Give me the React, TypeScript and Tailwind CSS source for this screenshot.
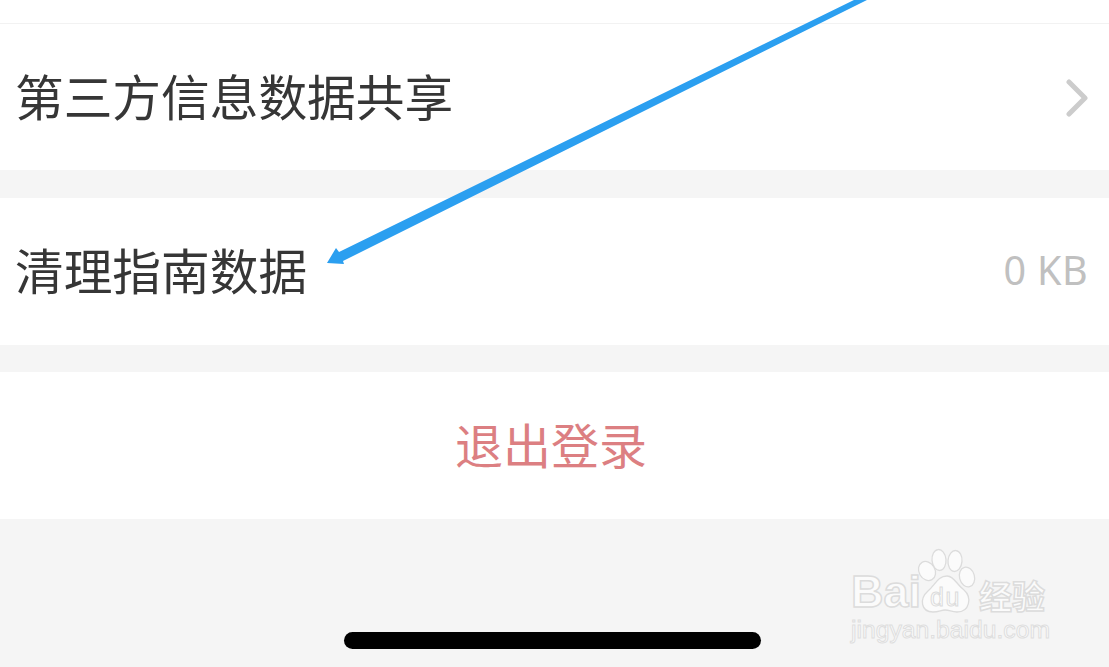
export default function App() {
  const font = "font-['Noto_Sans_CJK_SC','Noto_Sans',sans-serif]";
  const mark = "text-[#fbfbfb] [-webkit-text-stroke:1.5px_#dcdcdc]";
  return (
    <div className={`relative w-[1109px] h-[667px] overflow-hidden bg-[#f5f5f5] ${font}`}>
      <div className="h-[170px] bg-white flex flex-col">
        <div className="h-[24px] border-b border-[#f2f2f2]" />
        <div className="flex-1 flex items-center justify-between pl-[15px] pr-[21px]">
          <span className="text-[48.7px] leading-none text-[#363636] mb-[4px]">第三方信息数据共享</span>
          <svg width="22" height="38" viewBox="0 0 22 38" fill="none" className="mt-[2px]">
            <path d="M3 3 L19 19 L3 35" stroke="#cccccc" strokeWidth="5" strokeLinecap="round" strokeLinejoin="round" />
          </svg>
        </div>
      </div>
      <div className="mt-[28px] h-[147px] bg-white flex items-center justify-between pl-[15px] pr-[21px]">
        <span className="text-[48.7px] leading-none text-[#363636] mb-[4px]">清理指南数据</span>
        <span className="text-[39.5px] leading-none tracking-[0.4px] text-[#c0c0c0] font-['Noto_Sans',sans-serif] mb-[2px]">0 KB</span>
      </div>
      <div className="mt-[27px] h-[147px] bg-white flex items-center justify-center pr-[7px]">
        <span className="text-[48px] leading-none text-[#dc7f82] mb-[5px]">退出登录</span>
      </div>

      <div className="absolute left-[344px] top-[632px] w-[417px] h-[17px] rounded-full bg-black" />

      <svg className="absolute left-0 top-0" width="1109" height="667" viewBox="0 0 1109 667" fill="none">
        <path d="M856 -1 L869 -1 L343 261 L344 264 L327 263 L336 248 L339 252 Z" fill="#2b9ff0" />
      </svg>

      <div className="absolute left-[851px] top-[548px] w-[200px] flex flex-col gap-[5px]">
        <div className="flex items-end h-[65px]">
          <span className={`text-[45px] leading-none font-bold font-['Liberation_Sans',sans-serif] mb-[-1px] ${mark}`}>Bai</span>
          <div className="relative w-[60px] h-[65px] ml-[-4px] shrink-0">
            <svg width="60" height="65" viewBox="0 0 60 65" fill="#fbfbfb" stroke="#dcdcdc" strokeWidth="1.3">
              <ellipse cx="10" cy="23" rx="8" ry="10" transform="rotate(-30 10 23)" />
              <ellipse cx="22" cy="12" rx="7" ry="10.5" transform="rotate(-5 22 12)" />
              <ellipse cx="38" cy="13" rx="7" ry="10.5" transform="rotate(5 38 13)" />
              <ellipse cx="50" cy="29" rx="7.5" ry="10" transform="rotate(-15 50 29)" />
              <path d="M30 28 C37 28 39 36 47 42 C55 49 53 64 40 64 C34 64 33 62 28 62 C24 62 22 64 16 64 C4 64 2 51 11 43 C18 37 21 28 30 28 Z" />
            </svg>
            <span className="absolute left-[13px] top-[37px] text-[25px] leading-none tracking-[1.5px] font-['Liberation_Sans',sans-serif] text-[#fbfbfb] [-webkit-text-stroke:1px_#dcdcdc]">du</span>
          </div>
          <span className={`ml-[2px] text-[33px] leading-none font-bold mb-[1px] ${mark}`}>经验</span>
        </div>
        <span className="text-[24.7px] leading-none font-['Liberation_Sans',sans-serif] [-webkit-text-stroke:1px_#dedede] text-[#fbfbfb]">jingyan.baidu.com</span>
      </div>
    </div>
  );
}
